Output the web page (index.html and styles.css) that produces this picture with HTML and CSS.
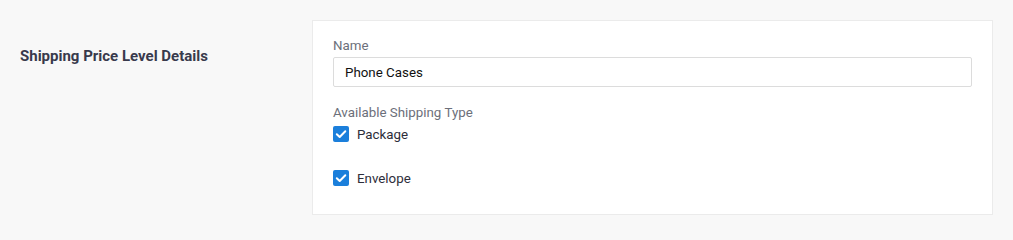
FILE: index.html
```html
<!DOCTYPE html>
<html lang="en">
<head>
<meta charset="utf-8">
<title>Shipping Price Level Details</title>
<link rel="stylesheet" href="styles.css">
</head>
<body>
<section class="section">
  <div class="section-side">
    <h2 class="section-title">Shipping Price Level Details</h2>
  </div>
  <div class="card">
    <div class="field">
      <label class="field-label" for="name">Name</label>
      <input class="text-input" id="name" type="text" value="Phone Cases">
    </div>
    <div class="field field-types">
      <div class="field-label">Available Shipping Type</div>
      <label class="check-row">
        <span class="check-box"><svg viewBox="0 0 16 16" width="16" height="16"><path d="M3.8 8.2 L6.7 11 L12.3 5.3" fill="none" stroke="#fff" stroke-width="2" stroke-linecap="round" stroke-linejoin="round"/></svg></span>
        <span class="check-text">Package</span>
      </label>
      <label class="check-row">
        <span class="check-box"><svg viewBox="0 0 16 16" width="16" height="16"><path d="M3.8 8.2 L6.7 11 L12.3 5.3" fill="none" stroke="#fff" stroke-width="2" stroke-linecap="round" stroke-linejoin="round"/></svg></span>
        <span class="check-text">Envelope</span>
      </label>
    </div>
  </div>
</section>
</body>
</html>
```
FILE: styles.css
```css
html, body {
  margin: 0;
  padding: 0;
  background: #f8f8f8;
  font-family: Roboto, "Liberation Sans", sans-serif;
}

.section {
  display: grid;
  grid-template-columns: 292px 1fr;
  padding: 20px 20px 0 20px;
}

.section-title {
  margin: 0;
  padding-top: 26px;
  font-size: 15px;
  line-height: 20px;
  font-weight: 700;
  color: #383a4c;
}

.card {
  background: #fff;
  border: 1px solid #ebebeb;
  padding: 16px 20px 26px 20px;
}

.field {
  display: flex;
  flex-direction: column;
}

.field-label {
  font-size: 13.33px;
  line-height: 18px;
  color: #6c6f7a;
  margin-bottom: 2px;
}

.text-input {
  height: 30px;
  box-sizing: border-box;
  border: 1px solid #dcdcdc;
  border-radius: 2px;
  padding: 0 11px;
  font-family: Roboto, "Liberation Sans", sans-serif;
  font-size: 13.33px;
  color: #111;
  background: #fff;
  outline: none;
}

.field-types {
  margin-top: 17px;
}

.check-row {
  display: flex;
  align-items: center;
  height: 20px;
  gap: 8px;
}

.check-row + .check-row {
  margin-top: 24px;
}

.check-box {
  width: 16px;
  height: 16px;
  background: #1b7fdb;
  border-radius: 2px;
  display: flex;
}

.check-text {
  font-size: 13.33px;
  color: #2d2e3a;
}
```
